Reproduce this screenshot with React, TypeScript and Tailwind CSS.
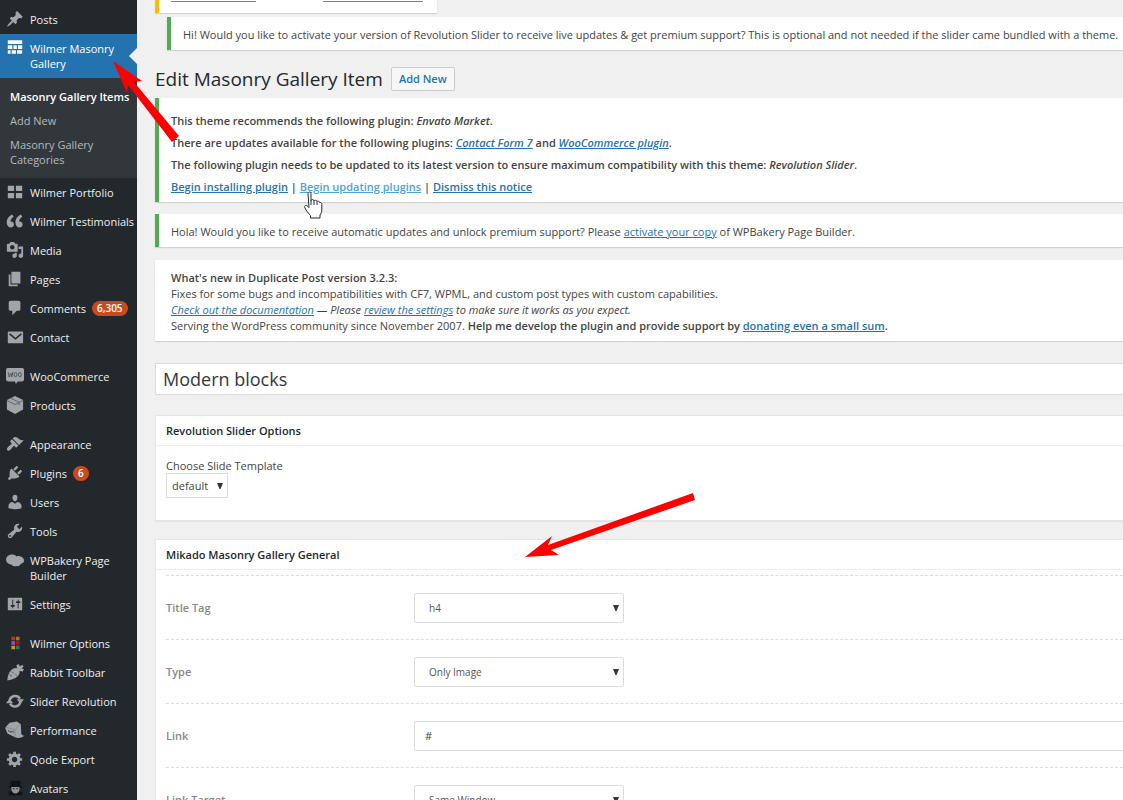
import { useState } from 'react';
import type { ReactNode } from 'react';

const icons: Record<string, ReactNode> = {
  pin: <path d="M10.44 3.02l1.82-1.82 6.36 6.35-1.83 1.82c-1.05-.68-2.48-.57-3.41.36l-.75.75c-.92.93-1.04 2.35-.35 3.41l-1.83 1.82-2.41-2.41-2.8 2.79c-.42.42-3.38 2.71-3.8 2.29s1.86-3.39 2.28-3.81l2.79-2.79L4.1 9.36l1.83-1.82c1.05.69 2.48.57 3.4-.36l.75-.75c.93-.92 1.05-2.35.36-3.41z" />,
  masonry: <path d="M2 1.500h16v4H2zM2 7h5v4H2zM8.300 7h3.700v4H8.300zM13.300 7H18v4h-4.700zM2 12.500h3v4H2zM6.300 12.500h4.700v4H6.300zM12.300 12.500H18v4h-5.700z" />,
  grid: <path d="M2 3h7v6H2zM11 3h7v6h-7zM2 11h7v6H2zM11 11h7v6h-7z" />,
  quote: <path d="M9.49 13.22c0-.74-.2-1.38-.61-1.9-.62-.78-1.83-.88-2.53-.72-.29-1.65 1.11-3.75 2.92-4.65L7.88 4c-2.73 1.3-5.42 4.28-4.96 8.05C3.21 14.43 4.59 16 6.54 16c.85 0 1.56-.25 2.12-.75s.83-1.18.83-2.03zm8.05 0c0-.74-.2-1.38-.61-1.9-.63-.78-1.83-.88-2.53-.72-.29-1.65 1.11-3.75 2.92-4.65L15.93 4c-2.73 1.3-5.41 4.28-4.95 8.05.29 2.38 1.66 3.95 3.61 3.95.85 0 1.56-.25 2.12-.75s.83-1.18.83-2.03z" transform="translate(10 10) scale(1.2) translate(-10.5 -10)" />,
  media: <path d="M13 11V4c0-.55-.45-1-1-1h-1.67L9 1H5L3.67 3H2c-.55 0-1 .45-1 1v7c0 .55.45 1 1 1h10c.55 0 1-.45 1-1zM7 4.5c1.38 0 2.5 1.12 2.5 2.5S8.38 9.5 7 9.5 4.5 8.38 4.5 7 5.62 4.5 7 4.5zM14 6h5v10.5c0 1.38-1.12 2.5-2.5 2.5S14 17.88 14 16.5s1.12-2.5 2.5-2.5c.17 0 .34.02.5.05V9h-3V6zm-4 8.05V13h2v3.5c0 1.38-1.12 2.5-2.5 2.5S7 17.88 7 16.5 8.12 14 9.5 14c.17 0 .34.02.5.05z" />,
  page: <path d="M6 15V2h10v13H6zm-1 1h8v2H3V5h2v11z" />,
  comment: <path d="M5 2h9c1.1 0 2 .9 2 2v7c0 1.1-.9 2-2 2h-2l-5 5v-5H5c-1.1 0-2-.9-2-2V4c0-1.1.9-2 2-2z" />,
  mail: (
    <>
      <rect x="2" y="4" width="17" height="13" rx="1" />
      <path d="M4 6.500L10.500 12 17 6.500" fill="none" stroke="#23282d" strokeWidth="1.600" />
    </>
  ),
  woo: (
    <>
      <path d="M2 1h16a2 2 0 0 1 2 2v11a2 2 0 0 1-2 2h-5l-2 3-1-3H2a2 2 0 0 1-2-2V3a2 2 0 0 1 2-2z" />
      <path d="M2.500 6l1 5 2-4 1 4 1-5.500M9 8.500a1.500 2.200 0 1 0 3.200 0a1.500 2.200 0 1 0-3.200 0M13.800 8.500a1.500 2.200 0 1 0 3.200 0a1.500 2.200 0 1 0-3.200 0" fill="none" stroke="#4a4f54" strokeWidth="1" />
    </>
  ),
  box: (
    <>
      <path d="M10 0l9 4.500v10.500l-9 5-9-5V4.500z" />
      <path d="M1 5l9 4.500L19 5M5.500 2.500l9 4.500v3" fill="none" stroke="#5b6065" strokeWidth="1" />
    </>
  ),
  brush: <path d="M14.48 11.06L7.41 3.99l1.5-1.5c.5-.56 2.3-.47 3.51.32 1.21.8 1.43 1.28 2.91 2.1 1.18.64 2.45 1.26 4.45.85zm-.71.71L6.7 4.7 4.93 6.47c-.39.39-.39 1.02 0 1.41l1.06 1.06c.39.39.39 1.03 0 1.42-.6.6-1.43 1.11-2.21 1.69-.35.26-.7.53-1.01.84C1.43 14.23.4 16.08 1.4 17.07c.99 1 2.84-.03 4.18-1.36.31-.31.58-.66.85-1.02.57-.78 1.08-1.61 1.69-2.21.39-.39 1.02-.39 1.41 0l1.06 1.06c.39.39 1.02.39 1.41 0z" />,
  plug: <path d="M13.11 4.36L9.87 7.6 8 5.73l3.24-3.24c.35-.34 1.05-.2 1.56.32.52.51.66 1.21.31 1.55zm-8 1.77l.91-1.12 9.01 9.01-1.19.84c-.71.71-2.63 1.16-3.82 1.16H6.14L4.9 17.26c-.59.59-1.54.59-2.12 0-.59-.58-.59-1.53 0-2.12l1.24-1.24v-3.88c0-1.13.4-3.19 1.09-3.89zm7.26 3.97l3.24-3.24c.34-.35 1.04-.21 1.55.31.52.51.66 1.21.31 1.55l-3.24 3.25z" />,
  user: <path d="M10 9.25c-2.27 0-2.73-3.44-2.73-3.44C7 4.02 7.82 2 9.97 2c2.16 0 2.98 2.02 2.71 3.81 0 0-.41 3.44-2.68 3.44zm0 2.57L12.72 10c2.39 0 4.52 2.33 4.52 4.53v2.49s-3.65 1.13-7.24 1.13c-3.65 0-7.24-1.13-7.24-1.13v-2.49c0-2.25 1.94-4.48 4.47-4.48z" />,
  wrench: <path d="M16.68 9.77c-1.34 1.34-3.3 1.67-4.95.99l-5.41 6.52c-.99.99-2.59.99-3.58 0s-.99-2.59 0-3.57l6.52-5.42c-.68-1.65-.35-3.61.99-4.95 1.28-1.28 3.12-1.62 4.72-1.06l-2.89 2.89 2.82 2.82 2.86-2.87c.53 1.58.18 3.39-1.08 4.65zM3.81 16.21c.4.39 1.04.39 1.43 0 .4-.4.4-1.04 0-1.43-.39-.4-1.03-.4-1.43 0-.39.39-.39 1.03 0 1.43z" />,
  bakery: <path d="M6 4c2.500-.6 4.500.3 5.500 2 2-.8 4-.6 5.500.3 2 1.200 3.300 2.700 3 4.700-.3 2-1.800 3-3.500 3.200-.6 1.800-2.500 2.800-4.500 2.600-2.500.6-4.500.2-5.500-1.600C3 15 .5 13 .1 10.300-.2 7.500 2 4.500 6 4z" />,
  sliders: <path d="M18 16V4c0-.55-.45-1-1-1H3c-.55 0-1 .45-1 1v12c0 .55.45 1 1 1h14c.55 0 1-.45 1-1zM8 11h1c.55 0 1 .45 1 1s-.45 1-1 1H8v1.5c0 .28-.22.5-.5.5s-.5-.22-.5-.5V13H6c-.55 0-1-.45-1-1s.45-1 1-1h1V5.5c0-.28.22-.5.5-.5s.5.22.5.5V11zm5-2h-1c-.55 0-1-.45-1-1s.45-1 1-1h1V5.5c0-.28.22-.5.5-.5s.5.22.5.5V7h1c.55 0 1 .45 1 1s-.45 1-1 1h-1v5.5c0 .28-.22.5-.5.5s-.5-.22-.5-.5V9z" />,
  swatches: (
    <>
      <path d="M6 3h4v4H6z" fill="#b5371b" />
      <path d="M11 3h4v4h-4z" fill="#b2750d" />
      <path d="M6 8h4v4H6z" fill="#8f4fc4" />
      <path d="M11 8h4v4h-4z" fill="#c00d12" />
      <path d="M6 13h4v4H6z" fill="#c99a0c" />
      <path d="M11 13h4v4h-4z" fill="#1f7a72" />
    </>
  ),
  carrot: (
    <>
      <path d="M12.500 6l-1-3.500 2.500-1.500 1.500 3L18 2l1.500 2-2 2 2.500 1-1.500 2.500-3.500-.5c.5 3-1 5.500-4 7.500-3 1.800-6 2.600-9.500 3C1.500 16 2.500 12.500 4.500 9.500 6.500 6.500 9.500 5 12.500 6z" />
      <path d="M6.500 9.500l2 2M4 13l2.500 2M10.500 12.500l1.500 1.500" stroke="#4a4f54" strokeWidth="1" />
    </>
  ),
  revolve: (
    <>
      <path d="M4 9.500a6.200 6.200 0 0 1 11.500-2M16 11a6.200 6.200 0 0 1-11.500 2" fill="none" stroke="currentColor" strokeWidth="2.800" />
      <path d="M12 8h8l-4 5zM0 12.500h8l-4-5z" />
    </>
  ),
  cube: (
    <>
      <path d="M4 2l8-1.500 4.500 3 .5 11c1 1.500 2 1.800 3.500 2-2 2.200-7 3-10.500 1.500L1.500 14-1 7.500z" />
      <path d="M0 7l10 2.500 6-6M10 9.500V18" fill="none" stroke="#82878c" strokeWidth="1" />
      <path d="M2.500 10l1 2 1-1 1 2 1-2M8.500 11.500c-2-.5-1 1.500 0 1.500" fill="none" stroke="#4a4f54" strokeWidth="1" />
    </>
  ),
  gear: <path d="M18 12h-2.18c-.17.7-.44 1.35-.81 1.93l1.54 1.54-2.1 2.1-1.54-1.54c-.58.36-1.23.63-1.91.79V19H8v-2.18c-.68-.16-1.33-.43-1.91-.79l-1.54 1.54-2.12-2.12 1.54-1.54c-.36-.58-.63-1.23-.79-1.91H1V9.03h2.17c.16-.7.44-1.35.8-1.94L2.43 5.55l2.1-2.1 1.54 1.54c.58-.37 1.24-.64 1.93-.81V2h3v2.18c.68.16 1.33.43 1.91.79l1.54-1.54 2.12 2.12-1.54 1.54c.36.59.64 1.24.8 1.94H18V12zm-8.5 1.5c1.66 0 3-1.34 3-3s-1.34-3-3-3-3 1.34-3 3 1.34 3 3 3z" />,
  avatar: (
    <>
      <path d="M5 2h11v6h2v2H3V8h2zM3 14h15v4H3z" fill="#101214" />
      <path d="M6 9h9v2c0 3-2 5-4.500 5S6 14 6 11z" fill="#8f9398" />
      <path d="M7.500 10h2v1.500h-2zM11.500 10h2v1.500h-2z" fill="#3a3f44" />
    </>
  ),
};

function MenuIcon({ name }: { name: string }) {
  return (
    <svg viewBox="0 0 20 20" className="-my-0.5 size-[18px] shrink-0 overflow-visible" fill="currentColor" aria-hidden="true">
      {icons[name]}
    </svg>
  );
}

function MenuItem({ icon, label, count }: { icon: string; label: string; count?: string }) {
  return (
    <li>
      <a href="#" className="flex items-start gap-1.5 py-[7px] pl-1.5 text-[#a0a5aa]">
        <MenuIcon name={icon} />
        <span className={label.includes('Page ') ? 'w-24 text-[#eee]' : 'whitespace-nowrap text-[#eee]'}>{label}</span>
        {count && (
          <span className="h-[15px] rounded-full bg-[#ca4a1f] px-[5px] text-[10px] leading-[15px] font-semibold text-white">{count}</span>
        )}
      </a>
    </li>
  );
}

const groups = [
  [
    { icon: 'grid', label: 'Wilmer Portfolio' },
    { icon: 'quote', label: 'Wilmer Testimonials' },
    { icon: 'media', label: 'Media' },
    { icon: 'page', label: 'Pages' },
    { icon: 'comment', label: 'Comments', count: '6,305' },
    { icon: 'mail', label: 'Contact' },
  ],
  [
    { icon: 'woo', label: 'WooCommerce' },
    { icon: 'box', label: 'Products' },
  ],
  [
    { icon: 'brush', label: 'Appearance' },
    { icon: 'plug', label: 'Plugins', count: '6' },
    { icon: 'user', label: 'Users' },
    { icon: 'wrench', label: 'Tools' },
    { icon: 'bakery', label: 'WPBakery Page Builder' },
    { icon: 'sliders', label: 'Settings' },
  ],
  [
    { icon: 'swatches', label: 'Wilmer Options' },
    { icon: 'carrot', label: 'Rabbit Toolbar' },
    { icon: 'revolve', label: 'Slider Revolution' },
    { icon: 'cube', label: 'Performance' },
    { icon: 'gear', label: 'Qode Export' },
    { icon: 'avatar', label: 'Avatars' },
  ],
];

function Sidebar() {
  return (
    <nav className="w-[137px] shrink-0 overflow-hidden bg-[#23282d] pt-[5px] leading-[15px]">
      <ul>
        <MenuItem icon="pin" label="Posts" />
        <li>
          <a href="#" className="relative flex items-start gap-1.5 bg-[#2573ae] py-[7px] pl-1.5 text-white">
            <MenuIcon name="masonry" />
            <span className="w-24">Wilmer Masonry Gallery</span>
            <span className="absolute top-1/2 right-0 -translate-y-1/2 border-y-8 border-r-8 border-y-transparent border-r-[#f0f0f0]" />
          </a>
          <ul className="flex flex-col gap-[9px] bg-[#32373c] px-2.5 pt-[11px] pb-[11px] text-[#b4b9be]">
            <li><a href="#" className="font-semibold whitespace-nowrap text-white">Masonry Gallery Items</a></li>
            <li><a href="#">Add New</a></li>
            <li><a href="#" className="block w-24">Masonry Gallery Categories</a></li>
          </ul>
        </li>
      </ul>
      <div className="flex flex-col gap-2.5">
        {groups.map((items, i) => (
          <ul key={i}>
            {items.map((item) => (
              <MenuItem key={item.label} {...item} />
            ))}
          </ul>
        ))}
      </div>
    </nav>
  );
}

function Link({ children, hover }: { children: ReactNode; hover?: boolean }) {
  return <a href="#" className={hover ? 'text-[#4ba3dc] underline' : 'text-[#2573ae] underline'}>{children}</a>;
}

function Select({ id, value, options, onChange, wide }: { id: string; value: string; options: string[]; onChange: (v: string) => void; wide?: boolean }) {
  return (
    <span className={wide ? 'relative block w-[210px]' : 'relative block w-[62px]'}>
      <select
        id={id}
        value={value}
        onChange={(e) => onChange(e.target.value)}
        className={
          wide
            ? 'block h-[30px] w-full appearance-none rounded-xs border border-[#ddd] bg-white pl-3.5 text-[10px] text-[#555]'
            : 'block h-[25px] w-full appearance-none border border-[#ddd] bg-white pl-[5px] text-[11px] text-[#444]'
        }
      >
        {options.map((o) => (
          <option key={o}>{o}</option>
        ))}
      </select>
      <svg viewBox="0 0 6 6" className="pointer-events-none absolute top-1/2 right-[5px] size-1.5 -translate-y-1/2" fill="#32373c">
        <path d="M0 0h6L3.500 6h-1z" />
      </svg>
    </span>
  );
}

function Field({ id, label, children }: { id: string; label: string; children: ReactNode }) {
  return (
    <div className="flex h-16 items-center border-t border-dashed border-[#ddd]">
      <label htmlFor={id} className="w-[248px] shrink-0 font-semibold text-[#888]">{label}</label>
      {children}
    </div>
  );
}

const notice = 'border-l-4 border-[#4cae4c] bg-white shadow-[0_1px_1px_rgba(0,0,0,0.12)]';
const panel = 'border border-r-0 border-[#e5e5e5] bg-white shadow-[0_1px_1px_rgba(0,0,0,0.05)]';
const heading = 'border-b border-[#eee] px-2.5 pt-[7px] pb-1.5 font-semibold text-[#23282d]';

export default function App() {
  const [title, setTitle] = useState('Modern blocks');
  const [template, setTemplate] = useState('default');
  const [tag, setTag] = useState('h4');
  const [type, setType] = useState('Only Image');
  const [link, setLink] = useState('#');
  const [target, setTarget] = useState('Same Window');

  return (
    <div className="relative flex h-screen overflow-hidden bg-[#f0f0f0] font-['Open_Sans','Noto_Sans',sans-serif] text-[11px] leading-4 text-[#444]">
      <Sidebar />
      <main className="min-w-0 flex-1 pl-[18px]">
        <div className="flex h-[13px] w-[282px] items-start gap-[67px] border-l-4 border-[#ffb900] bg-white pl-3 shadow-[0_1px_1px_rgba(0,0,0,0.12)]">
          <span className="h-0.5 w-[85px] border-b border-b-[#4a8fc4]" />
          <span className="h-0.5 w-[100px] border-b border-b-[#4a8fc4]" />
        </div>

        <div className={`${notice} mt-1 ml-3 pt-2.5 pb-2 pl-3 leading-[15px] whitespace-nowrap`}>
          Hi! Would you like to activate your version of Revolution Slider to receive live updates &amp; get premium support? This is optional and not needed if the slider came bundled with a theme.
        </div>

        <div className="mt-[17px] flex items-center gap-2">
          <h1 className="text-[19px] leading-6 text-[#23282d]">Edit Masonry Gallery Item</h1>
          <button className="h-6 rounded-xs border border-[#ccc] bg-[#f7f7f7] px-[7px] font-semibold text-[#2573ae]">Add New</button>
        </div>

        <div className={`${notice} mt-[7px] flex flex-col gap-1.5 pt-[15px] pb-[7px] pl-3 font-semibold whitespace-nowrap`}>
          <p>This theme recommends the following plugin: <em>Envato Market</em>.</p>
          <p>There are updates available for the following plugins: <em><Link>Contact Form 7</Link></em> and <em><Link>WooCommerce plugin</Link></em>.</p>
          <p>The following plugin needs to be updated to its latest version to ensure maximum compatibility with this theme: <em>Revolution Slider</em>.</p>
          <p><Link>Begin installing plugin</Link> | <Link hover>Begin updating plugins</Link> | <Link>Dismiss this notice</Link></p>
        </div>

        <div className={`${notice} mt-3 pt-2.5 pb-2 pl-3 leading-[15px] whitespace-nowrap`}>
          Hola! Would you like to receive automatic updates and unlock premium support? Please <Link>activate your copy</Link> of WPBakery Page Builder.
        </div>

        <div className="mt-[13px] bg-white pt-2.5 pb-[7px] pl-4 whitespace-nowrap shadow-[0_1px_1px_rgba(0,0,0,0.12)]">
          <p className="font-semibold">What's new in Duplicate Post version 3.2.3:</p>
          <p>Fixes for some bugs and incompatibilities with CF7, WPML, and custom post types with custom capabilities.</p>
          <p className="italic"><Link>Check out the documentation</Link> — Please <Link>review the settings</Link> to make sure it works as you expect.</p>
          <p>Serving the WordPress community since November 2007. <strong className="font-semibold">Help me develop the plugin and provide support by <Link>donating even a small sum</Link>.</strong></p>
        </div>

        <input
          aria-label="Title"
          value={title}
          onChange={(e) => setTitle(e.target.value)}
          className="mt-[22px] block h-8 w-full border border-r-0 border-[#ddd] bg-white px-[7px] text-[18px] text-[#32373c]"
        />

        <section className={`${panel} mt-5`}>
          <h2 className={heading}>Revolution Slider Options</h2>
          <div className="px-2.5 pt-3 pb-[22px]">
            <label htmlFor="template" className="block leading-[15px]">Choose Slide Template</label>
            <Select id="template" value={template} options={['default', 'blank']} onChange={setTemplate} />
          </div>
        </section>

        <section className={`${panel} mt-[18px]`}>
          <h2 className={heading}>Mikado Masonry Gallery General</h2>
          <div className="pt-[5px] pl-2.5">
            <Field id="tag" label="Title Tag">
              <Select wide id="tag" value={tag} options={['h2', 'h3', 'h4', 'h5']} onChange={setTag} />
            </Field>
            <Field id="type" label="Type">
              <Select wide id="type" value={type} options={['Only Image', 'Standard']} onChange={setType} />
            </Field>
            <Field id="link" label="Link">
              <input
                id="link"
                value={link}
                onChange={(e) => setLink(e.target.value)}
                className="h-[30px] min-w-0 flex-1 rounded-l-xs border border-r-0 border-[#ddd] bg-white px-2.5 text-[11px] text-[#444]"
              />
            </Field>
            <Field id="target" label="Link Target">
              <Select wide id="target" value={target} options={['Same Window', 'New Window']} onChange={setTarget} />
            </Field>
          </div>
        </section>
      </main>

      {/* annotations drawn over the page */}
      <svg width="700" height="600" className="pointer-events-none absolute top-0 left-0" aria-hidden="true">
        <path fill="#f00" d="M113 61L142 81L134 82L179 136L172 142L128 85L127 93Z" />
        <path fill="#f00" d="M525 557L552 536L548 545L693 493L695 500L551 550L559 555Z" />
        <path
          d="M308 193.500c0-2 3-2 3 0v7c.5-1.500 3-1.300 3 .5.500-1.300 3-1 3 .8.600-1.200 2.600-.8 2.800 1 .8-.6 2-.1 2 1.500v5.700c0 2-.8 3.500-1.800 5v3h-9.500v-2.500c-2-2-4-4.500-5.500-7.500-1.200-2 .8-3.500 2.300-2l1.700 1.500z"
          fill="#fff"
          stroke="#23283a"
          strokeLinejoin="round"
        />
        <path d="M311 200v5M314 201v4M317 202v3" stroke="#23283a" />
      </svg>
    </div>
  );
}
